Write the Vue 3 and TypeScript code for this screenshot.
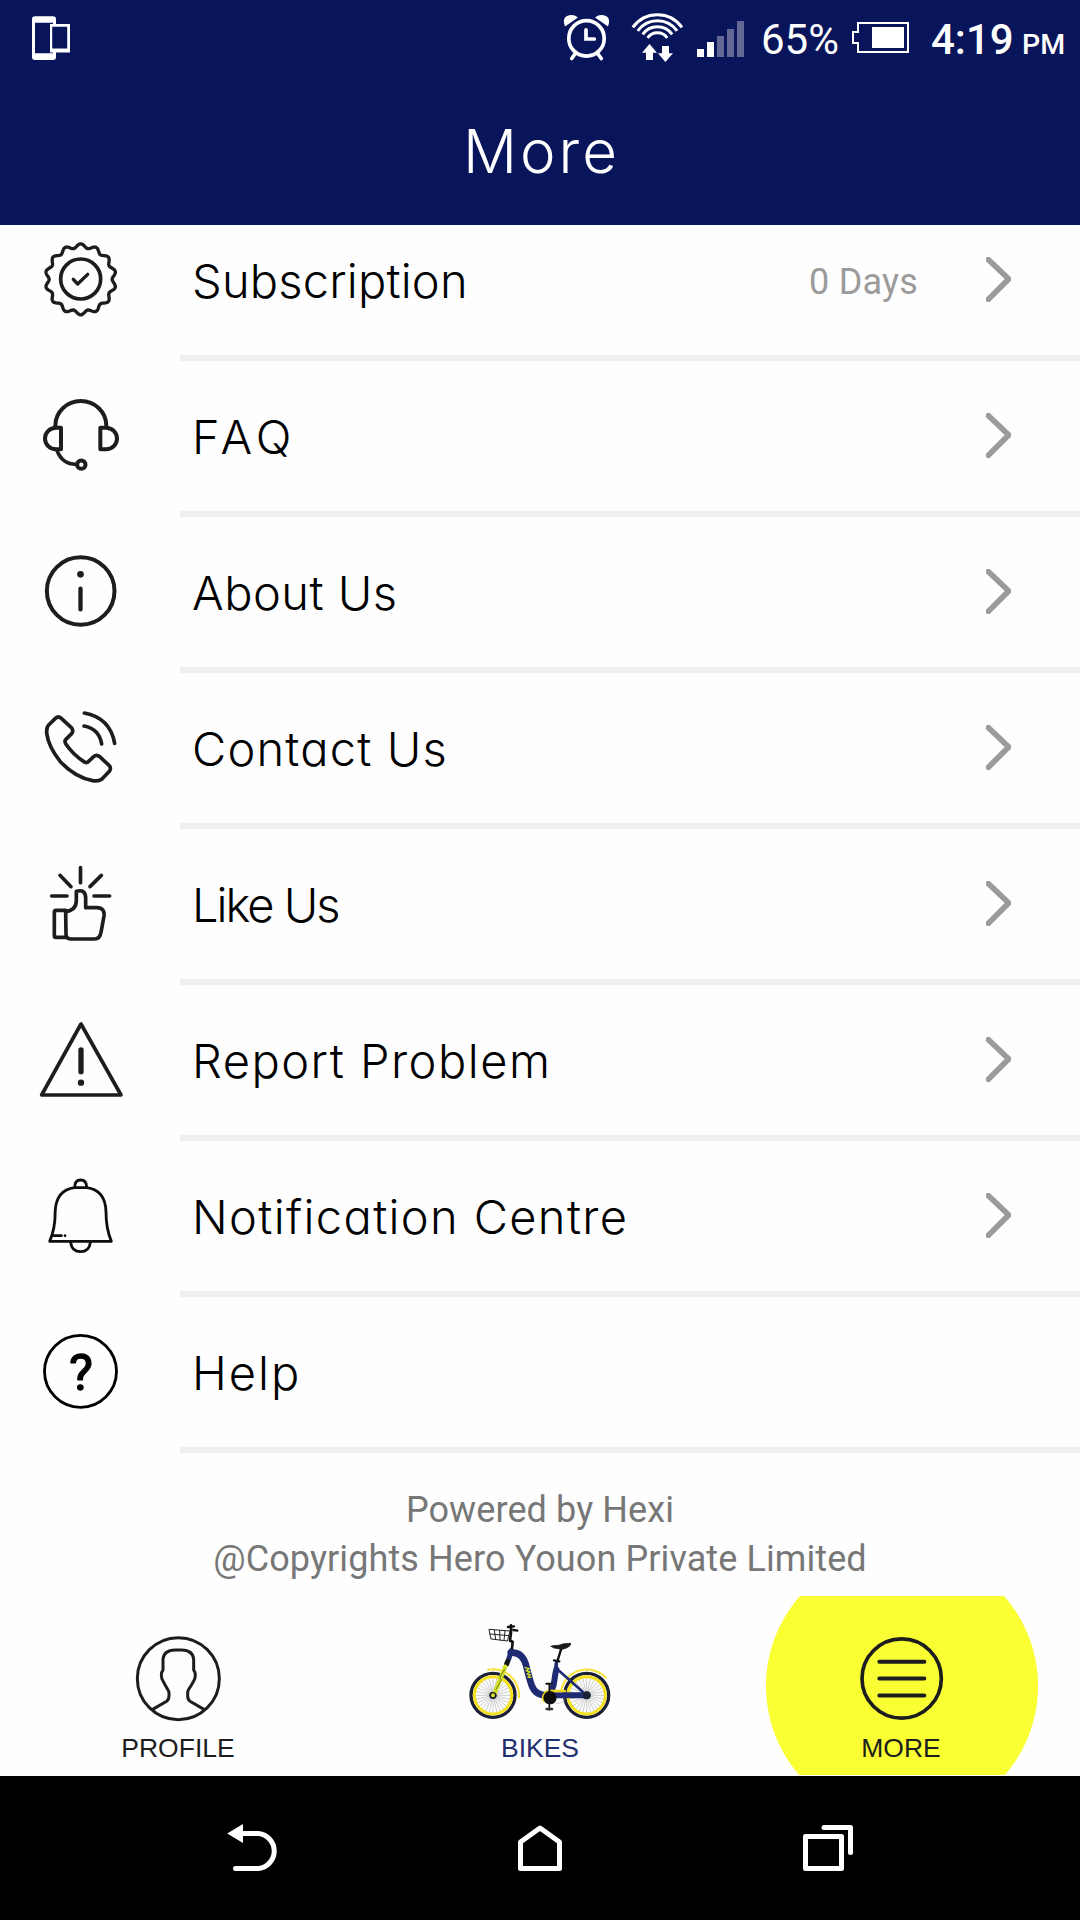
<script setup lang="ts">
interface MenuItem {
  id: string
  label: string
  viewBox: string
  spacing: number
  value?: string
  arrow: boolean
}

const items: MenuItem[] = [
  { id: 'subscription', label: 'Subscription', viewBox: '108 30 270 270', spacing: 0.2, value: '0 Days', arrow: true },
  { id: 'faq', label: 'FAQ', viewBox: '108 498 270 270', spacing: 5, arrow: true },
  { id: 'about', label: 'About Us', viewBox: '108 51 270 270', spacing: 0.5, arrow: true },
  { id: 'contact', label: 'Contact Us', viewBox: '108 519 270 270', spacing: 1.2, arrow: true },
  { id: 'like', label: 'Like Us', viewBox: '108 42 270 270', spacing: -2, arrow: true },
  { id: 'report', label: 'Report Problem', viewBox: '108 510 270 270', spacing: 1.5, arrow: true },
  { id: 'notification', label: 'Notification Centre', viewBox: '108 63 270 270', spacing: 1.36, arrow: true },
  { id: 'help', label: 'Help', viewBox: '108 531 270 270', spacing: 2, arrow: false },
]

// Scalloped seal outline with fourteen lobes.
function sealPath(cx: number, cy: number): string {
  const pts: string[] = []
  for (let i = 0; i < 280; i++) {
    const a = (i / 280) * Math.PI * 2
    const r = 100.5 + 6 * Math.cos(14 * a)
    pts.push(`${(cx + r * Math.sin(a)).toFixed(1)} ${(cy - r * Math.cos(a)).toFixed(1)}`)
  }
  return `M${pts.join('L')}Z`
}
const seal = sealPath(242, 163)

function spokes(cx: number, cy: number): string {
  let d = ''
  for (let i = 0; i < 28; i++) {
    const a = (i / 28) * Math.PI * 2
    d += `M${cx} ${cy}L${(cx + 52 * Math.cos(a)).toFixed(1)} ${(cy + 52 * Math.sin(a)).toFixed(1)}`
  }
  return d
}
const wheels = [129, 410].map((x) => ({ x, d: spokes(x, 286) }))

const wifiArcs = [30, 24, 18, 12].map((r) => {
  const dx = r * 0.819
  const y = 44.7 - r * 0.574
  return `M${657.4 - dx} ${y}A${r} ${r} 0 0 1 ${657.4 + dx} ${y}`
})
</script>

<template>
  <div class="screen">
    <header class="top">
      <div class="status">
        <svg class="device" width="42" height="48" viewBox="30 14 42 48">
          <path fill="#fff" fill-rule="evenodd" d="M35 16.3H53Q56 16.3 56 19V24H70V52.5H56V57Q56 60 53 60H35Q32 60 32 57V19Q32 16.3 35 16.3ZM35 22.7V53.2H53V52.5H50V24H53V22.7ZM52.2 26.7V48.6H67.2V26.7Z" />
        </svg>
        <div class="status-right">
          <svg width="200" height="56" viewBox="555 10 200 56">
            <g fill="none" stroke="#fff" stroke-width="3.7" stroke-linecap="round">
              <circle cx="586.5" cy="38.4" r="17.7" />
              <path d="M586 29.8V39H594.3M575 54L571.7 58.5M598 54L601.3 58.5" />
            </g>
            <path fill="#fff" d="M565 26.500Q562 18.500 567 16Q573 13.500 578 17.500ZM608 26.500Q611 18.500 606 16Q600 13.500 595 17.500Z" />
            <path v-for="(d, i) in wifiArcs" :key="i" :d="d" fill="none" stroke="#fff" stroke-width="3" />
            <path fill="#fff" d="M649.5 44L657 52.700H653V60H646V52.700H642ZM665.400 62L673 53.300H669V46H662V53.300H658Z" />
            <path fill="#fff" d="M697 49h7v8h-7zM707 42h7v15h-7z" />
            <path fill="#646897" d="M717 36h7v21h-7zM727 29h7v28h-7zM737 21h7v36h-7z" />
          </svg>
          <span class="pct">65%</span>
          <svg class="battery" width="60" height="36" viewBox="851 20 60 36">
            <path fill="none" stroke="#fff" stroke-width="2" d="M858 23H908V52H858V43H853V32H858Z" />
            <path fill="#fff" d="M872 27h32v21h-32z" />
          </svg>
          <span class="time">4:19</span>
          <span class="ampm">PM</span>
        </div>
      </div>
      <h1 class="title">More</h1>
    </header>

    <main class="list">
      <div v-for="item in items" :key="item.id" class="row">
        <svg class="row-icon" width="90" height="90" :viewBox="item.viewBox" fill="none" stroke="#1d1d1d" stroke-width="11" stroke-linecap="round" stroke-linejoin="round">
          <template v-if="item.id === 'subscription'">
            <path :d="seal" stroke-width="10" />
            <circle cx="242" cy="162" r="60" />
            <path d="M220 163L233 177L263 148" stroke-width="10" />
          </template>
          <template v-else-if="item.id === 'faq'">
            <path d="M166 606V602A76.500 74 0 0 1 319 602V606" stroke-width="12" />
            <path d="M183 608H168A33 32.500 0 0 0 168 673H183ZM301 608H318A33 32.500 0 0 1 318 673H301Z" stroke-width="12" />
            <path d="M171 677C182 705 200 718 228 718" />
            <circle cx="244" cy="719" r="12.500" stroke-width="12" />
          </template>
          <template v-else-if="item.id === 'about'">
            <circle cx="242" cy="183" r="101.500" stroke-width="12" />
            <circle cx="241.500" cy="133" r="10" fill="#1d1d1d" stroke="none" />
            <path d="M241.500 176V238" stroke-width="13" />
          </template>
          <template v-else-if="item.id === 'contact'">
            <path d="M166 565Q175 557 184 565L214 593Q222 601 215 611L197 629Q193 633 197 641Q220 675 255 697Q261 699 265 695L281 680Q290 672 299 680L327 706Q335 714 328 724L306 747Q296 755 278 752Q224 741 181 695Q146 652 140 610Q139 592 146 585Z" />
            <path d="M252 588Q298 597 305 642M253 549Q330 563 344 640" />
          </template>
          <template v-else-if="item.id === 'like'">
            <path d="M241.500 68V113M180 91L213 125M304 91L270 125M155 153H201M282 153H329" />
            <path d="M197 196H168Q163 196 163 201V272Q163 277 168 277H199" />
            <path d="M197 200Q229 195 229 167V139Q257 131 257 160V188H291Q315 189 312 213L303 262Q300 282 284 282H212Q198 282 198 268Z" />
          </template>
          <template v-else-if="item.id === 'report'">
            <path d="M243 537L125 750H363Z" />
            <path d="M243 615V680" stroke-width="16" />
            <circle cx="243" cy="713" r="9.500" fill="#1d1d1d" stroke="none" />
          </template>
          <template v-else-if="item.id === 'notification'">
            <g stroke="#0c0f0e" stroke-width="8.500">
              <path d="M149 274Q166 235 165.500 185Q168 120 224 113H260Q316 120 318 185Q318 235 334 274Z" />
              <path d="M224 112Q224 90 242 90Q260 90 260 112M212 277Q215 305 242 305Q268 305 271 277M160 257H184M195 257V257.100" />
            </g>
          </template>
          <template v-else>
            <circle cx="241.500" cy="664" r="108" stroke="#000" stroke-width="8.500" />
            <text class="mark" x="243" y="719" text-anchor="middle">?</text>
          </template>
        </svg>
        <div class="row-body">
          <span class="label" :style="{ letterSpacing: item.spacing + 'px' }">{{ item.label }}</span>
          <span v-if="item.value" class="value">{{ item.value }}</span>
          <svg v-if="item.arrow" class="chevron" width="25" height="45" viewBox="858 96 75 135">
            <path d="M859 98L926 162L859 229" fill="none" stroke="#9b9b9b" stroke-width="17" />
          </svg>
        </div>
      </div>
    </main>

    <footer class="credits">
      <p>Powered by Hexi</p>
      <p>@Copyrights Hero Youon Private Limited</p>
    </footer>

    <nav class="tabs">
      <div class="tab">
        <svg width="160" height="140" viewBox="-6 18 480 420" fill="none" stroke="#1d1d1d" stroke-width="9">
          <circle cx="235" cy="266" r="123" />
          <path d="M158 358L200 334Q207 329 207 318V310Q207 303 203 298Q196 287 190 275Q184 268 184 255Q184 246 189 240V208Q191 181 225 180H245Q279 181 281 208V240Q286 246 286 255Q286 268 280 275Q274 287 266 298Q263 303 263 310V318Q263 329 270 334L312 358" />
        </svg>
        <span class="tab-label">PROFILE</span>
      </div>
      <div class="tab">
        <svg width="160" height="140" viewBox="30 -12 480 420" fill="none" stroke-linecap="round" stroke-linejoin="round">
          <g v-for="w in wheels" :key="w.x">
            <path :d="w.d" stroke="#8a8a8a" stroke-width="1.300" />
            <circle :cx="w.x" cy="286" r="66" stroke="#1b2035" stroke-width="10" />
            <circle :cx="w.x" cy="286" r="56" stroke="#f3e11d" stroke-width="9" />
            <circle :cx="w.x" cy="286" r="11" fill="#1b2035" />
          </g>
          <path d="M114 209A79 79 0 0 1 207 292M334 268A79 79 0 0 1 468 233" stroke="#f6e23a" stroke-width="6" />
          <path d="M182 158Q216 154 228 195Q238 236 245 256Q256 286 290 286" stroke="#1f2c74" stroke-width="20" />
          <path d="M290 286H408" stroke="#1f2c74" stroke-width="18" />
          <path d="M319 208L316 222L311 255L302 280" stroke="#1f2c74" stroke-width="18" />
          <path d="M319 190L315 240" stroke="#1f2c74" stroke-width="11" />
          <path d="M322 208L398 275" stroke="#1f2c74" stroke-width="8" />
          <path d="M184 152L176 178" stroke="#1f2c74" stroke-width="15" />
          <path d="M173 184L170 192" stroke="#141414" stroke-width="15" />
          <path d="M166 200L132 284" stroke="#d3df23" stroke-width="13" />
          <path d="M164 208L150 232L154 240L138 268" stroke="#77801c" stroke-width="3" />
          <circle cx="129" cy="286" r="8" fill="#d3df23" stroke="#1b2035" stroke-width="4" />
          <circle cx="410" cy="286" r="12" fill="#1b2035" />
          <path d="M183 76V98L180 122L188 125L186 145" stroke="#111" stroke-width="8" />
          <path d="M174 81L192 79M190 90L202 92" stroke="#111" stroke-width="7" />
          <path d="M118 88L180 93L172 123L124 117ZM120 102L177 107M133 90L137 118M149 91L150 120M165 93L162 121" stroke="#222" stroke-width="3" />
          <path d="M225 203L238 206L228 212L240 216L231 222L241 224L234 231L243 232" stroke="#d3df23" stroke-width="4" />
          <path d="M334 145L322 184M312 181L328 184" stroke="#111" stroke-width="7" />
          <path d="M303 139Q310 135 325 136Q345 128 362 130Q365 136 350 144Q335 151 325 146Q310 146 303 139Z" fill="#1a1a1a" stroke="#1a1a1a" stroke-width="2" />
          <path d="M345 273H300A20 20 0 0 0 282 303" stroke="#f0d91c" stroke-width="7" />
          <path d="M298 252V330" stroke="#111" stroke-width="5" />
          <circle cx="300" cy="293" r="20" fill="#0e0e10" />
          <path d="M289 251H306" stroke="#111" stroke-width="6" />
          <path d="M290 327H306" stroke="#333" stroke-width="8" />
          <path d="M318 309Q332 314 344 300" stroke="#b5b5b5" stroke-width="2" />
        </svg>
        <span class="tab-label blue">BIKES</span>
      </div>
      <div class="tab active">
        <svg width="160" height="140" viewBox="246 48 480 420" fill="none" stroke="#1d1d1d" stroke-linecap="round">
          <circle cx="485" cy="295.500" r="119" stroke-width="11" />
          <path d="M418 245H553M418 295.500H553M418 346.500H553" stroke-width="12" />
        </svg>
        <span class="tab-label more-label">MORE</span>
      </div>
    </nav>

    <div class="sysnav">
      <svg width="60" height="60" viewBox="223 1818 60 60">
        <path fill="none" stroke="#fff" stroke-width="5" stroke-linecap="round" d="M241 1833.500H258.500A17.600 17.600 0 0 1 258.500 1868.500H235.500" />
        <path fill="#fff" d="M227.200 1833.500L243 1824V1843Z" />
      </svg>
      <svg width="60" height="60" viewBox="511 1818 60 60">
        <path fill="none" stroke="#fff" stroke-width="5" stroke-linejoin="round" d="M520.500 1868.500V1842L540 1828L559.500 1842V1868.500Z" />
      </svg>
      <svg width="60" height="60" viewBox="798 1818 60 60">
        <path fill="none" stroke="#fff" stroke-width="5" stroke-linejoin="round" stroke-linecap="round" d="M805.500 1836.500H841.500V1868.500H805.500ZM824 1827.500H850.500V1852.500" />
      </svg>
    </div>
  </div>
</template>

<style>
body {
  margin: 0;
  background: #fff;
}
</style>

<style scoped>
.screen {
  width: 1080px;
  height: 1920px;
  display: flex;
  flex-direction: column;
  background: #fefefe;
  overflow: hidden;
  font-family: Roboto, sans-serif;
}
svg {
  display: block;
  flex: none;
}
.top {
  height: 225px;
  flex: none;
  background: #09155a;
  color: #fff;
}
.status {
  height: 75px;
  display: flex;
  justify-content: space-between;
  padding: 0 15px 0 30px;
  box-sizing: border-box;
}
.device {
  margin-top: 14px;
}
.status-right {
  display: flex;
  align-items: baseline;
  line-height: 80px;
}
.status-right svg {
  align-self: flex-start;
  margin-top: 10px;
}
.status-right .battery {
  margin-top: 20px;
}
.pct {
  width: 90px;
  padding-left: 6px;
  font-size: 42px;
}
.time {
  margin-left: 20px;
  width: 91px;
  font-size: 42px;
  font-weight: 500;
}
.ampm {
  width: 43px;
  font-size: 28.5px;
  font-weight: 500;
}
.title {
  margin: 0;
  height: 150px;
  line-height: 152px;
  padding-left: 3px;
  text-align: center;
  font-family: Inter, sans-serif;
  font-weight: 300;
  font-size: 60px;
  letter-spacing: 3px;
}
.list {
  height: 1228px;
  flex: none;
  overflow: hidden;
  display: flex;
  flex-direction: column;
  justify-content: flex-end;
}
.row {
  height: 156px;
  flex: none;
  display: flex;
}
.row-icon {
  margin: 30px 54px 0 36px;
}
.row-body {
  flex: 1;
  height: 150px;
  border-bottom: 6px solid #eff0f2;
  display: flex;
  align-items: center;
  padding: 0 69px 0 12px;
}
.label {
  flex: 1;
  white-space: nowrap;
  color: #000;
  font-family: Inter, sans-serif;
  font-weight: 300;
  font-size: 47px;
  font-feature-settings: 'cv11' 1;
}
.value {
  margin: 3px 68px 0 0;
  font-size: 36px;
  letter-spacing: 0.2px;
  color: #9b9b9b;
}
.chevron {
  margin-bottom: 2px;
}
.mark {
  font-family: Roboto, sans-serif;
  font-weight: 400;
  font-size: 152px;
  fill: #000;
  stroke: #000;
  stroke-width: 4px;
}
.credits {
  height: 143px;
  flex: none;
  padding-top: 33px;
  box-sizing: border-box;
  text-align: center;
  font-size: 36px;
  letter-spacing: 0.1px;
  line-height: 49px;
  color: #777;
}
.credits p {
  margin: 0;
}
.tabs {
  height: 180px;
  flex: none;
  display: flex;
  justify-content: center;
  overflow: hidden;
}
.tab {
  width: 362px;
  flex: none;
  height: 179px;
  display: flex;
  flex-direction: column;
  align-items: center;
}
.active {
  background: radial-gradient(circle at 181px 90px, #f9ff33 135.500px, transparent 136.500px);
}
.tab-label {
  font-family: 'Liberation Sans', Arial, sans-serif;
  font-size: 26.500px;
  line-height: 30px;
  margin-top: -3px;
  color: #1d1d1d;
}
.more-label {
  padding-right: 2px;
}
.blue {
  color: #23306f;
}
.sysnav {
  height: 144px;
  flex: none;
  background: #000;
  display: flex;
  align-items: center;
  justify-content: space-between;
  padding: 0 222px 0 223px;
}
</style>
